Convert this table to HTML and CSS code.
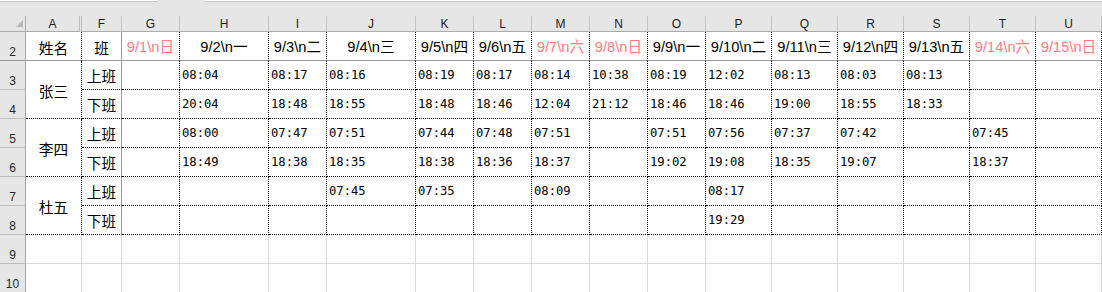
FILE: index.html
```html
<!DOCTYPE html>
<html lang="zh">
<head>
<meta charset="utf-8">
<title>考勤表</title>
<link rel="stylesheet" href="styles.css">
</head>
<body>
<div class="top"><div class="box nb"></div><div class="gap"></div><div class="box fb"></div></div>
<div class="sheet">
  <!-- column headers -->
  <div class="corner"><svg width="7" height="7" viewBox="0 0 7 7"><polygon points="7,0 7,7 0,7" fill="#b9b9b9"/></svg></div>
  <div class="ch hid">A</div><div class="ch">F</div><div class="ch">G</div><div class="ch">H</div><div class="ch">I</div><div class="ch">J</div><div class="ch">K</div><div class="ch">L</div><div class="ch">M</div><div class="ch">N</div><div class="ch">O</div><div class="ch">P</div><div class="ch">Q</div><div class="ch">R</div><div class="ch">S</div><div class="ch">T</div><div class="ch">U</div>

  <!-- row 2 -->
  <div class="rh fz-b">2</div>
  <div class="c cj hd fz-b">姓名</div>
  <div class="c cj hd fz-b fz-r">班</div>
  <div class="c hd we fz-b">9/1\n日</div>
  <div class="c hd fz-b">9/2\n一</div>
  <div class="c hd fz-b">9/3\n二</div>
  <div class="c hd fz-b">9/4\n三</div>
  <div class="c hd fz-b">9/5\n四</div>
  <div class="c hd fz-b">9/6\n五</div>
  <div class="c hd we fz-b">9/7\n六</div>
  <div class="c hd we fz-b">9/8\n日</div>
  <div class="c hd fz-b">9/9\n一</div>
  <div class="c hd fz-b">9/10\n二</div>
  <div class="c hd fz-b">9/11\n三</div>
  <div class="c hd fz-b">9/12\n四</div>
  <div class="c hd fz-b">9/13\n五</div>
  <div class="c hd we fz-b">9/14\n六</div>
  <div class="c hd we fz-b">9/15\n日</div>

  <!-- row 3 -->
  <div class="rh">3</div>
  <div class="c cj nm m2">张三</div>
  <div class="c cj nm fz-r">上班</div>
  <div class="c t"></div><div class="c t">08:04</div><div class="c t">08:17</div><div class="c t">08:16</div><div class="c t">08:19</div><div class="c t">08:17</div><div class="c t">08:14</div><div class="c t">10:38</div><div class="c t">08:19</div><div class="c t">12:02</div><div class="c t">08:13</div><div class="c t">08:03</div><div class="c t">08:13</div><div class="c t"></div><div class="c t"></div>

  <!-- row 4 -->
  <div class="rh">4</div>
  <div class="c cj nm fz-r">下班</div>
  <div class="c t"></div><div class="c t">20:04</div><div class="c t">18:48</div><div class="c t">18:55</div><div class="c t">18:48</div><div class="c t">18:46</div><div class="c t">12:04</div><div class="c t">21:12</div><div class="c t">18:46</div><div class="c t">18:46</div><div class="c t">19:00</div><div class="c t">18:55</div><div class="c t">18:33</div><div class="c t"></div><div class="c t"></div>

  <!-- row 5 -->
  <div class="rh">5</div>
  <div class="c cj nm m2">李四</div>
  <div class="c cj nm fz-r">上班</div>
  <div class="c t"></div><div class="c t">08:00</div><div class="c t">07:47</div><div class="c t">07:51</div><div class="c t">07:44</div><div class="c t">07:48</div><div class="c t">07:51</div><div class="c t"></div><div class="c t">07:51</div><div class="c t">07:56</div><div class="c t">07:37</div><div class="c t">07:42</div><div class="c t"></div><div class="c t">07:45</div><div class="c t"></div>

  <!-- row 6 -->
  <div class="rh">6</div>
  <div class="c cj nm fz-r">下班</div>
  <div class="c t"></div><div class="c t">18:49</div><div class="c t">18:38</div><div class="c t">18:35</div><div class="c t">18:38</div><div class="c t">18:36</div><div class="c t">18:37</div><div class="c t"></div><div class="c t">19:02</div><div class="c t">19:08</div><div class="c t">18:35</div><div class="c t">19:07</div><div class="c t"></div><div class="c t">18:37</div><div class="c t"></div>

  <!-- row 7 -->
  <div class="rh">7</div>
  <div class="c cj nm m2">杜五</div>
  <div class="c cj nm fz-r">上班</div>
  <div class="c t"></div><div class="c t"></div><div class="c t"></div><div class="c t">07:45</div><div class="c t">07:35</div><div class="c t"></div><div class="c t">08:09</div><div class="c t"></div><div class="c t"></div><div class="c t">08:17</div><div class="c t"></div><div class="c t"></div><div class="c t"></div><div class="c t"></div><div class="c t"></div>

  <!-- row 8 -->
  <div class="rh">8</div>
  <div class="c cj nm fz-r">下班</div>
  <div class="c t"></div><div class="c t"></div><div class="c t"></div><div class="c t"></div><div class="c t"></div><div class="c t"></div><div class="c t"></div><div class="c t"></div><div class="c t"></div><div class="c t">19:29</div><div class="c t"></div><div class="c t"></div><div class="c t"></div><div class="c t"></div><div class="c t"></div>

  <!-- row 9 -->
  <div class="rh">9</div>
  <div class="g"></div><div class="g fz-r"></div><div class="g"></div><div class="g"></div><div class="g"></div><div class="g"></div><div class="g"></div><div class="g"></div><div class="g"></div><div class="g"></div><div class="g"></div><div class="g"></div><div class="g"></div><div class="g"></div><div class="g"></div><div class="g"></div><div class="g"></div>

  <!-- row 10 -->
  <div class="rh">10</div>
  <div class="g"></div><div class="g fz-r"></div><div class="g"></div><div class="g"></div><div class="g"></div><div class="g"></div><div class="g"></div><div class="g"></div><div class="g"></div><div class="g"></div><div class="g"></div><div class="g"></div><div class="g"></div><div class="g"></div><div class="g"></div><div class="g"></div><div class="g"></div>
</div>
</body>
</html>
```

FILE: styles.css
```css
html, body {
  margin: 0;
  padding: 0;
  background: #fff;
}
body {
  width: 1102px;
  height: 292px;
  overflow: hidden;
  font-family: "Liberation Sans", "Noto Sans CJK SC", sans-serif;
}
.top {
  height: 16px;
  background: #e6e6e6;
  display: flex;
  align-items: flex-start;
}
.top .box {
  height: 1px;
  background: #fff;
  border-bottom: 1px solid #c6c6c6;
}
.top .nb { width: 158px; }
.top .gap { width: 46px; }
.top .fb { flex: 1; }

.sheet {
  display: grid;
  grid-template-columns: 26px 56px 40px 58px 89px 58px 89px repeat(5, 58px) repeat(6, 66px);
  grid-template-rows: 16px repeat(9, 29px);
}
.sheet > div {
  box-sizing: border-box;
  display: flex;
  align-items: center;
  min-width: 0;
  white-space: nowrap;
  overflow: hidden;
}
.corner {
  background: #e6e6e6;
  border-right: 1px solid #ababab;
  border-bottom: 1px solid #ababab;
  justify-content: flex-end;
  align-items: flex-end !important;
  padding: 0 2px 4px 0;
}
.corner svg { display: block; }
.ch {
  background: #e6e6e6;
  border-right: 1px solid #c4c4c4;
  border-bottom: 1px solid #ababab;
  justify-content: center;
  font-size: 12px;
  line-height: 12px;
  color: #1e1e1e;
}
.ch.hid { border-right: 3px double #bcbcbc; }
.rh {
  background: #e6e6e6;
  border-right: 1px solid #a6a6a6;
  border-bottom: 1px solid #bcbcbc;
  justify-content: center;
  align-items: flex-end !important;
  font-size: 12px;
  line-height: 12px;
  padding-bottom: 2px;
  color: #262626;
}
.c {
  border-right: 1px dotted #000;
  border-bottom: 1px dotted #000;
  font-size: 14.67px;
  line-height: 17px;
  color: #000;
}
.hd { justify-content: center; padding-top: 3px; }
.nm { justify-content: center; padding-top: 1px; }
.we { color: #ff7c80; }
.cj { font-family: "Noto Sans CJK SC", sans-serif; }
.m2 { grid-row: span 2; }
.t {
  font-family: "DejaVu Sans Mono", monospace;
  font-size: 12.2px;
  padding-left: 2px;
  padding-top: 1px;
}
.fz-r { border-right: 1px solid #9c9c9c; }
.fz-b { border-bottom: 1px solid #9c9c9c; }
.g {
  border-right: 1px solid #d9d9d9;
  border-bottom: 1px solid #d9d9d9;
}
```
